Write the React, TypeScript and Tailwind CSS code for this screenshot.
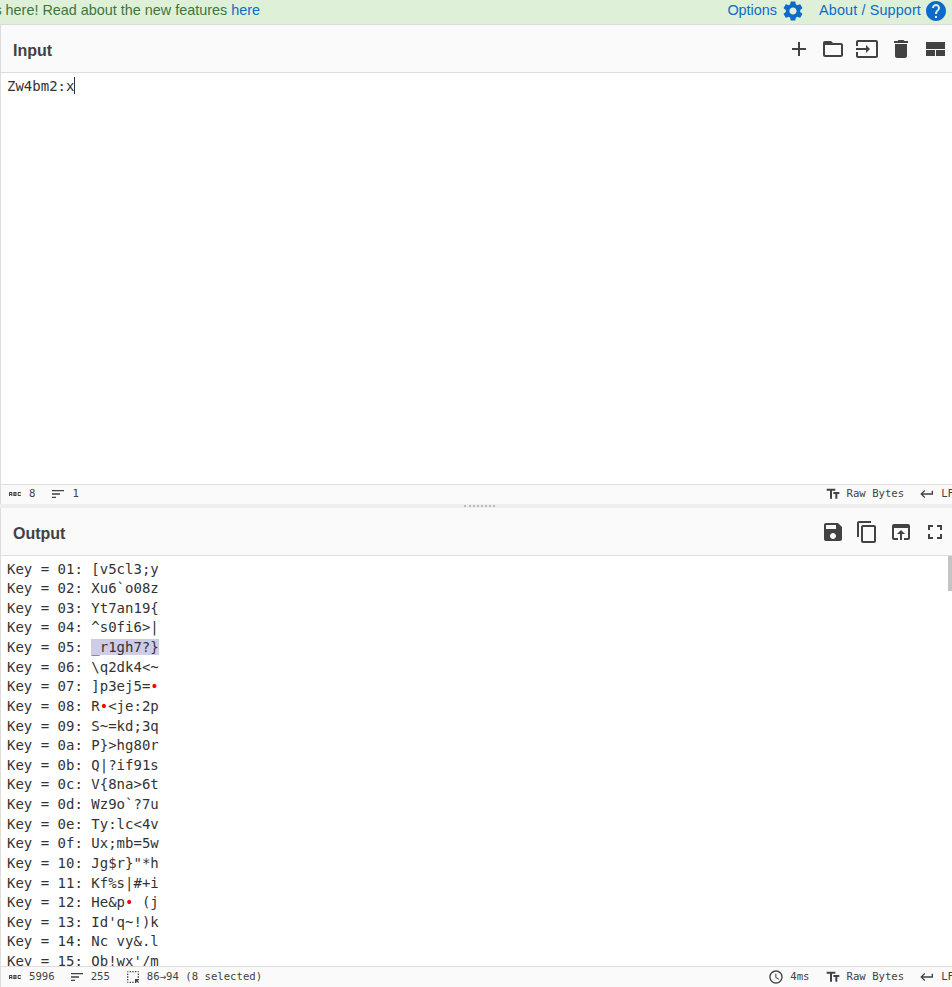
import React from "react";

const P = {
  add: "M19 13h-6v6h-2v-6H5v-2h6V5h2v6h6v2z",
  folder: "M20 6h-8l-2-2H4c-1.1 0-1.99.9-1.99 2L2 18c0 1.1.9 2 2 2h16c1.1 0 2-.9 2-2V8c0-1.1-.9-2-2-2zm0 12H4V8h16v10z",
  input: "M21 3.01H3c-1.1 0-2 .9-2 2V9h2V4.99h18v14.03H3V15H1v4.01c0 1.1.9 1.98 2 1.98h18c1.1 0 2-.88 2-1.98v-14c0-1.11-.9-2-2-2zM11 16l4-4-4-4v3H1v2h10v3z",
  del: "M6 19c0 1.1.9 2 2 2h8c1.1 0 2-.9 2-2V7H6v12zM19 4h-3.5l-1-1h-5l-1 1H5v2h14V4z",
  layout: "M3 5h19v7H3zM3 13h9v6H3zM13 13h9v6h-9z",
  save: "M17 3H5c-1.11 0-2 .9-2 2v14c0 1.1.89 2 2 2h14c1.1 0 2-.9 2-2V7l-4-4zm-5 16c-1.66 0-3-1.34-3-3s1.34-3 3-3 3 1.34 3 3-1.34 3-3 3zm3-10H5V5h10v4z",
  copy: "M16 1H4c-1.1 0-2 .9-2 2v14h2V3h12V1zm3 4H8c-1.1 0-2 .9-2 2v14c0 1.1.9 2 2 2h11c1.1 0 2-.9 2-2V7c0-1.1-.9-2-2-2zm0 16H8V7h11v14z",
  open: "M19 4H5c-1.11 0-2 .9-2 2v12c0 1.1.89 2 2 2h4v-2H5V8h14v10h-4v2h4c1.1 0 2-.9 2-2V6c0-1.1-.89-2-2-2zm-7 6l-4 4h3v6h2v-6h3l-4-4z",
  full: "M7 14H5v5h5v-2H7v-3zm-2-4h2V7h3V5H5v5zm12 7h-3v2h5v-5h-2v3zM14 5v2h3v3h2V5h-5z",
  gear: "M19.14 12.94c.04-.3.06-.61.06-.94 0-.32-.02-.64-.07-.94l2.03-1.58c.18-.14.23-.41.12-.61l-1.92-3.32c-.12-.22-.37-.29-.59-.22l-2.39.96c-.5-.38-1.03-.7-1.62-.94l-.36-2.54c-.04-.24-.24-.41-.48-.41h-3.84c-.24 0-.43.17-.47.41l-.36 2.54c-.59.24-1.13.57-1.62.94l-2.39-.96c-.22-.08-.47 0-.59.22L2.74 8.87c-.12.21-.08.47.12.61l2.03 1.58c-.05.3-.09.63-.09.94s.02.64.07.94l-2.03 1.58c-.18.14-.23.41-.12.61l1.92 3.32c.12.22.37.29.59.22l2.39-.96c.5.38 1.03.7 1.62.94l.36 2.54c.05.24.24.41.48.41h3.84c.24 0 .44-.17.47-.41l.36-2.54c.59-.24 1.13-.56 1.62-.94l2.39.96c.22.08.47 0 .59-.22l1.92-3.32c.12-.22.07-.47-.12-.61l-2.01-1.58zM12 15.6c-1.98 0-3.6-1.62-3.6-3.6s1.62-3.6 3.6-3.6 3.6 1.62 3.6 3.6-1.62 3.6-3.6 3.6z",
  help: "M12 2C6.48 2 2 6.48 2 12s4.48 10 10 10 10-4.48 10-10S17.52 2 12 2zm1 17h-2v-2h2v2zm2.07-7.75l-.9.92C13.45 12.9 13 13.5 13 15h-2v-.5c0-1.1.45-2.1 1.17-2.83l1.24-1.26c.37-.36.59-.86.59-1.41 0-1.1-.9-2-2-2s-2 .9-2 2H8c0-2.21 1.79-4 4-4s4 1.79 4 4c0 .88-.36 1.68-.93 2.25z",
  tt: "M2.5 4v3h5v12h3V7h5V4h-13zm19 5h-9v3h3v7h3v-7h3V9z",
  ret: "M19 7v4H5.83l3.58-3.59L8 6l-6 6 6 6 1.41-1.41L5.83 13H21V7z",
  clock: "M11.99 2C6.47 2 2 6.48 2 12s4.47 10 9.99 10C17.52 22 22 17.52 22 12S17.52 2 11.99 2zM12 20c-4.42 0-8-3.58-8-8s3.58-8 8-8 8 3.58 8 8-3.58 8-8 8zm.5-13H11v6l5.25 3.15.75-1.23-4.5-2.67z",
  sort: "M3 18h6v-2H3v2zM3 6v2h18V6H3zm0 7h12v-2H3v2z",
  abc: "M21 11h-1.5v-.5h-2v3h2V13H21v1c0 .55-.45 1-1 1h-3c-.55 0-1-.45-1-1v-4c0-.55.45-1 1-1h3c.55 0 1 .45 1 1v1zM8 10v5H6.5v-1.5h-2V15H3v-5c0-.55.45-1 1-1h3c.55 0 1 .45 1 1zm-1.5.5h-2V12h2v-1.5zm7 1.5c.55 0 1 .45 1 1v1c0 .55-.45 1-1 1h-4V9h4c.55 0 1 .45 1 1v1c0 .55-.45 1-1 1zM11 10.5v.75h2v-.75h-2zm2 2.25h-2v.75h2v-.75z",
  sel: "M17 5h-2V3h2v2zm-2 16h2v-2.59L19.59 21 21 19.59 18.41 17H21v-2h-6v6zm4-12h2V7h-2v2zm0 4h2v-2h-2v2zm-8 8h2v-2h-2v2zM7 5h2V3H7v2zM3 17h2v-2H3v2zm2 4v-2H3c0 1.1.9 2 2 2zM19 3v2h2c0-1.1-.9-2-2-2zm-8 2h2V3h-2v2zM3 9h2V7H3v2zm4 12h2v-2H7v2zm-4-8h2v-2H3v2zm0-8h2V3c-1.1 0-2 .9-2 2z",
};

function Icon({ d, className }: { d: string; className: string }) {
  return (
    <svg viewBox="0 0 24 24" fill="currentColor" className={className}>
      <path d={d} />
    </svg>
  );
}

const rows: [string, string][] = [
  ["01", "[v5cl3;y"], ["02", "Xu6`o08z"], ["03", "Yt7an19{"], ["04", "^s0fi6>|"],
  ["05", "_r1gh7?}"], ["06", "\\q2dk4<~"], ["07", "]p3ej5=•"], ["08", "R•<je:2p"],
  ["09", "S~=kd;3q"], ["0a", "P}>hg80r"], ["0b", "Q|?if91s"], ["0c", "V{8na>6t"],
  ["0d", "Wz9o`?7u"], ["0e", "Ty:lc<4v"], ["0f", "Ux;mb=5w"], ["10", "Jg$r}\"*h"],
  ["11", "Kf%s|#+i"], ["12", "He&p• (j"], ["13", "Id'q~!)k"], ["14", "Nc vy&.l"],
  ["15", "Ob!wx'/m"],
];

function Value({ v }: { v: string }) {
  return (
    <>
      {v.split("").map((c, i) =>
        c === "•" ? <span key={i} className="text-[#f00]">•</span> : <span key={i}>{c}</span>
      )}
    </>
  );
}

function Header({ title, icons }: { title: string; icons: React.ReactNode }) {
  return (
    <div className="h-[48px] shrink-0 flex items-center justify-between bg-[#fafafa] border-b border-[#ddd] pl-[12px]">
      <span className="text-[16px] font-bold text-[#424242] pt-[4px]">{title}</span>
      <div className="flex items-center text-[#424242]">{icons}</div>
    </div>
  );
}

function Btn({ d, size = "w-6 h-6" }: { d: string; size?: string }) {
  return (
    <span className="w-[34px] h-[34px] flex items-center justify-center">
      <Icon d={d} className={size} />
    </span>
  );
}

function RawAndLf() {
  return (
    <>
      <span className="flex items-center gap-[6px] ml-[15px]">
        <Icon d={P.tt} className="w-4 h-4" />
        Raw Bytes
      </span>
      <span className="flex items-center gap-[6px] ml-[15px] -mr-[2px]">
        <Icon d={P.ret} className="w-4 h-4" />
        LF
      </span>
    </>
  );
}

const mono = "font-['DejaVu_Sans_Mono',monospace]";

export default function App() {
  return (
    <div className="w-[952px] h-[987px] overflow-hidden flex flex-col bg-white font-['Liberation_Sans',Arial,sans-serif]">
      <div className="h-[25px] shrink-0 flex items-center bg-[#dff0d8] border-b border-[#d8dcd6] text-[14.4px] leading-none pb-[3px]">
        <div className="w-[260px] shrink-0 overflow-hidden whitespace-nowrap flex justify-end text-[#3c763d]">
          <span className="shrink-0">
            Version 10 is here! Read about the new features <span className="text-[#0b6bcb]">here</span>
          </span>
        </div>
        <div className="ml-auto flex items-center text-[#0b6bcb] pr-[4px]">
          <span>Options</span>
          <Icon d={P.gear} className="w-6 h-6 ml-[4px]" />
          <span className="ml-[14px] tracking-[0.13px]">About / Support</span>
          <Icon d={P.help} className="w-6 h-6 ml-[3px]" />
        </div>
      </div>

      <div className="flex-1 flex flex-col border-l border-[#ddd] min-h-0">
        <Header
          title="Input"
          icons={
            <>
              <Btn d={P.add} />
              <Btn d={P.folder} />
              <Btn d={P.input} />
              <Btn d={P.del} />
              <Btn d={P.layout} />
            </>
          }
        />
        <div className={`flex-1 pt-[4px] pl-[6px] text-[14px] leading-[19.6px] text-[#333] ${mono}`}>
          Zw4bm2:x<span className="inline-block w-px h-[17px] bg-[#333] align-[-3px]" />
        </div>
        <div className={`h-[20px] shrink-0 flex items-center bg-[#fafafa] border-t border-[#ddd] pl-[6px] pb-[1px] text-[10.65px] text-[#424242] ${mono}`}>
          <Icon d={P.abc} className="w-4 h-4" />
          <span className="ml-[6px]">8</span>
          <Icon d={P.sort} className="w-4 h-4 ml-[15px]" />
          <span className="ml-[6px]">1</span>
          <div className="ml-auto flex items-center">
            <RawAndLf />
          </div>
        </div>
      </div>

      <div className="h-[4px] shrink-0 bg-[#eee] flex items-center justify-center pl-[7px]">
        <div className="w-[31px] border-t-2 border-dotted border-[#bbb]" />
      </div>

      <div className="h-[479px] shrink-0 flex flex-col border-l border-[#ddd]">
        <Header
          title="Output"
          icons={
            <>
              <Btn d={P.save} />
              <Btn d={P.copy} />
              <Btn d={P.open} />
              <Btn d={P.full} />
            </>
          }
        />
        <div className={`relative flex-1 min-h-0 overflow-hidden pt-[3.5px] pl-[6px] text-[14px] leading-[19.63px] text-[#333] whitespace-pre ${mono}`}>
          {rows.map(([k, v]) => (
            <div key={k}>
              {`Key = ${k}: `}
              {k === "05" ? (
                <span className="bg-[#d0cce6]">{v}</span>
              ) : (
                <Value v={v} />
              )}
            </div>
          ))}
          <div className="absolute top-0 right-0 w-[4px] h-[35px] bg-[#c4c4c4]" />
        </div>
        <div className={`h-[21px] shrink-0 flex items-center bg-[#fafafa] border-t border-[#ddd] pl-[6px] text-[10.65px] text-[#424242] ${mono}`}>
          <Icon d={P.abc} className="w-4 h-4" />
          <span className="ml-[6px]">5996</span>
          <Icon d={P.sort} className="w-4 h-4 ml-[14px]" />
          <span className="ml-[6px]">255</span>
          <Icon d={P.sel} className="w-4 h-4 ml-[15px]" />
          <span className="ml-[6px]">86→94 (8 selected)</span>
          <div className="ml-auto flex items-center">
            <span className="flex items-center gap-[6px]">
              <Icon d={P.clock} className="w-4 h-4" />
              4ms
            </span>
            <RawAndLf />
          </div>
        </div>
      </div>
    </div>
  );
}
